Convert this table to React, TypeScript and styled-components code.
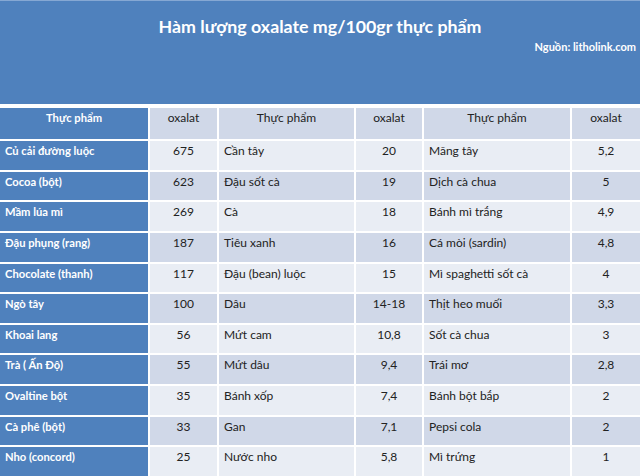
import React from "react";
import styled, { createGlobalStyle } from "styled-components";

const Global = createGlobalStyle`
  html, body { margin: 0; padding: 0; background: #ffffff; }
  #root { width: 640px; height: 476px; overflow: hidden; }
`;

const Page = styled.div`
  width: 640px;
  height: 476px;
  display: flex;
  flex-direction: column;
  background: #ffffff;
  font-family: Lato, "Open Sans", sans-serif;
`;

const Banner = styled.header`
  height: 104px;
  box-sizing: border-box;
  background: #4f81bd;
  border-top: 1px solid #86a8d3;
  display: flex;
  flex-direction: column;
  padding: 12px 4px 0 0;
  color: #ffffff;
`;

const Title = styled.h1`
  margin: 0;
  font-size: 17.8px;
  font-weight: 700;
  line-height: 26px;
  text-align: center;
  padding-left: 4px;
`;

const Source = styled.div`
  font-size: 11px;
  font-weight: 700;
  line-height: 14px;
  text-align: right;
  margin-top: 1px;
`;

const Table = styled.div`
  margin-top: 4px;
  flex: 1;
  display: grid;
  grid-template-columns: 148px 67px 135px 66px 146px 68px;
  grid-template-rows: 31px repeat(11, 1fr);
  gap: 2px;
  background: #ffffff;
`;

const Cell = styled.div<{ $tone: "blue" | "head" | "light" | "dark"; $align: "left" | "center" }>`
  box-sizing: border-box;
  padding: 2px 5px 0 5px;
  font-size: ${(p) => (p.$tone === "blue" ? "11.2px" : "12px")};
  line-height: 15px;
  text-align: ${(p) => p.$align};
  white-space: nowrap;
  overflow: hidden;
  background: ${(p) =>
    p.$tone === "blue"
      ? "#4f81bd"
      : p.$tone === "light"
      ? "#e9edf4"
      : "#d0d8e8"};
  color: ${(p) => (p.$tone === "blue" ? "#ffffff" : "#222222")};
  font-weight: ${(p) => (p.$tone === "blue" ? 700 : 400)};
`;

const rows: string[][] = [
  ["Củ cải đường luộc", "675", "Cần tây", "20", "Măng tây", "5,2"],
  ["Cocoa (bột)", "623", "Đậu sốt cà", "19", "Dịch cà chua", "5"],
  ["Mầm lúa mì", "269", "Cà", "18", "Bánh mì trắng", "4,9"],
  ["Đậu phụng (rang)", "187", "Tiêu xanh", "16", "Cá mòi (sardin)", "4,8"],
  ["Chocolate (thanh)", "117", "Đậu (bean) luộc", "15", "Mì spaghetti sốt cà", "4"],
  ["Ngò tây", "100", "Dâu", "14-18", "Thịt heo muối", "3,3"],
  ["Khoai lang", "56", "Mứt cam", "10,8", "Sốt cà chua", "3"],
  ["Trà ( Ấn Độ)", "55", "Mứt dâu", "9,4", "Trái mơ", "2,8"],
  ["Ovaltine bột", "35", "Bánh xốp", "7,4", "Bánh bột bắp", "2"],
  ["Cà phê (bột)", "33", "Gan", "7,1", "Pepsi cola", "2"],
  ["Nho (concord)", "25", "Nước nho", "5,8", "Mì trứng", "1"],
];

const headers = ["Thực phẩm", "oxalat", "Thực phẩm", "oxalat", "Thực phẩm", "oxalat"];

export default function App() {
  return (
    <>
      <Global />
      <Page>
        <Banner>
          <Title>Hàm lượng oxalate mg/100gr thực phẩm</Title>
          <Source>Nguồn: litholink.com</Source>
        </Banner>
        <Table>
          {headers.map((h, i) => (
            <Cell key={"h" + i} $tone={i === 0 ? "blue" : "head"} $align="center">
              {h}
            </Cell>
          ))}
          {rows.map((r, ri) =>
            r.map((v, ci) => (
              <Cell
                key={ri + "-" + ci}
                $tone={ci === 0 ? "blue" : ri % 2 === 0 ? "light" : "dark"}
                $align={ci % 2 === 1 ? "center" : "left"}
              >
                {v}
              </Cell>
            ))
          )}
        </Table>
      </Page>
    </>
  );
}
